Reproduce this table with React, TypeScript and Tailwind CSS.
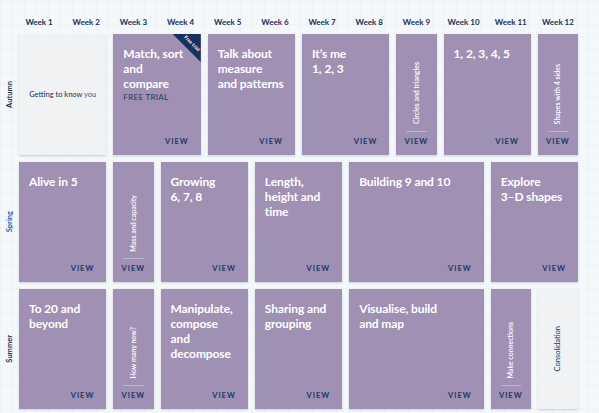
import React from "react";

type Card =
  | { kind: "wide"; span: string; title: React.ReactNode; extra?: string; ribbon?: boolean }
  | { kind: "narrow"; label: string }
  | { kind: "gray"; span: string; label: React.ReactNode; vertical?: boolean };

const weeks = Array.from({ length: 12 }, (_, i) => `Week ${i + 1}`);

const rows: { season: string; color: string; cards: Card[] }[] = [
  {
    season: "Autumn",
    color: "text-[#1b2f55]",
    cards: [
      { kind: "gray", span: "col-span-2", label: (<>Getting to know <span className="text-[#2a5ea8]">you</span></>) },
      { kind: "wide", span: "col-span-2", title: (<>Match, sort<br />and<br />compare</>), extra: "FREE TRIAL", ribbon: true },
      { kind: "wide", span: "col-span-2", title: (<>Talk about<br />measure<br />and patterns</>) },
      { kind: "wide", span: "col-span-2", title: (<>It’s me<br />1, 2, 3</>) },
      { kind: "narrow", label: "Circles and triangles" },
      { kind: "wide", span: "col-span-2", title: (<>1, 2, 3, 4, 5</>) },
      { kind: "narrow", label: "Shapes with 4 sides" },
    ],
  },
  {
    season: "Spring",
    color: "text-[#2a63b0]",
    cards: [
      { kind: "wide", span: "col-span-2", title: (<>Alive in 5</>) },
      { kind: "narrow", label: "Mass and capacity" },
      { kind: "wide", span: "col-span-2", title: (<>Growing<br />6, 7, 8</>) },
      { kind: "wide", span: "col-span-2", title: (<>Length,<br />height and<br />time</>) },
      { kind: "wide", span: "col-span-3", title: (<>Building 9 and 10</>) },
      { kind: "wide", span: "col-span-2", title: (<>Explore<br />3–D shapes</>) },
    ],
  },
  {
    season: "Summer",
    color: "text-[#1b2f55]",
    cards: [
      { kind: "wide", span: "col-span-2", title: (<>To 20 and<br />beyond</>) },
      { kind: "narrow", label: "How many now?" },
      { kind: "wide", span: "col-span-2", title: (<>Manipulate,<br />compose<br />and<br />decompose</>) },
      { kind: "wide", span: "col-span-2", title: (<>Sharing and<br />grouping</>) },
      { kind: "wide", span: "col-span-3", title: (<>Visualise, build<br />and map</>) },
      { kind: "narrow", label: "Make connections" },
      { kind: "gray", span: "col-span-1", label: "Consolidation", vertical: true },
    ],
  },
];

function View({ center }: { center?: boolean }) {
  return (
    <div
      className={`text-[7.5px] font-bold tracking-[1px] text-[#1d3766] leading-none ${center ? "text-center" : "text-right"}`}
    >
      VIEW
    </div>
  );
}

function CardView({ card }: { card: Card }) {
  if (card.kind === "gray") {
    return (
      <div
        className={`${card.span} bg-[#f0f2f4] rounded-[1px] shadow-[0_1px_2px_rgba(0,0,0,0.18)] flex items-center justify-center`}
      >
        <div
          className={`text-[7.5px] text-[#1b2f55] leading-none ${card.vertical ? "[writing-mode:vertical-rl] rotate-180" : ""}`}
        >
          {card.label}
        </div>
      </div>
    );
  }
  if (card.kind === "narrow") {
    return (
      <div className="col-span-1 bg-[#a090b4] shadow-[0_1px_2px_rgba(0,0,0,0.15)] flex flex-col">
        <div className="flex-1 flex items-end justify-center pb-[6px]">
          <div className="[writing-mode:vertical-rl] rotate-180 text-white text-[7px] font-semibold leading-none whitespace-nowrap">
            {card.label}
          </div>
        </div>
        <div className="h-px bg-[#beb2cc] mx-[10px]" />
        <div className="pt-[6px] pb-[10px]">
          <View center />
        </div>
      </div>
    );
  }
  return (
    <div className={`${card.span} relative bg-[#a090b4] shadow-[0_1px_2px_rgba(0,0,0,0.15)] flex flex-col overflow-hidden`}>
      <div className="flex-1 pl-[10px] pt-[12px]">
        <div className="w-fit text-white text-[12px] font-bold leading-[15px] whitespace-nowrap tracking-[-0.1px]">{card.title}</div>
        {card.extra && (
          <div className="mt-[2px] text-[#1d3766] text-[8px] tracking-[0.3px] leading-none">{card.extra}</div>
        )}
      </div>
      <div className="pr-[12px] pb-[10px]">
        <View />
      </div>
      {card.ribbon && (
        <div className="absolute top-0 right-0 w-[28px] h-[28px] bg-[#17305e] [clip-path:polygon(0_0,100%_0,100%_100%)]">
          <div className="absolute top-[7px] left-[9px] rotate-45 text-white text-[5px] font-bold leading-none whitespace-nowrap">
            Free trial
          </div>
        </div>
      )}
    </div>
  );
}

export default function App() {
  return (
    <div
      className="w-[599px] h-[413px] overflow-hidden bg-[#f5f8fa] font-['Lato','Liberation_Sans',sans-serif] bg-[linear-gradient(#eef3f6_1px,transparent_1px),linear-gradient(90deg,#eef3f6_1px,transparent_1px)] bg-[length:12px_12px]"
    >
      <div className="pl-[19px] pt-[17px] w-[578px]">
        <div className="grid grid-cols-12 gap-x-[7px] h-[10px] mb-[7px]">
          {weeks.map((w) => (
            <div key={w} className="text-center text-[8px] font-bold text-[#1b2f55] leading-[10px] whitespace-nowrap">
              {w}
            </div>
          ))}
        </div>
        <div className="flex flex-col gap-[7px]">
          {rows.map((row, i) => (
            <div key={row.season} className={`relative grid grid-cols-12 gap-x-[7px] ${i === 0 ? "h-[121px]" : "h-[120px]"}`}>
              <div className="absolute left-[-19px] top-0 bottom-0 w-[19px] flex items-center justify-center">
                <div className={`[writing-mode:vertical-rl] rotate-180 text-[7.5px] font-bold leading-none ${row.color}`}>
                  {row.season}
                </div>
              </div>
              {row.cards.map((c, j) => (
                <CardView key={j} card={c} />
              ))}
            </div>
          ))}
        </div>
      </div>
    </div>
  );
}
